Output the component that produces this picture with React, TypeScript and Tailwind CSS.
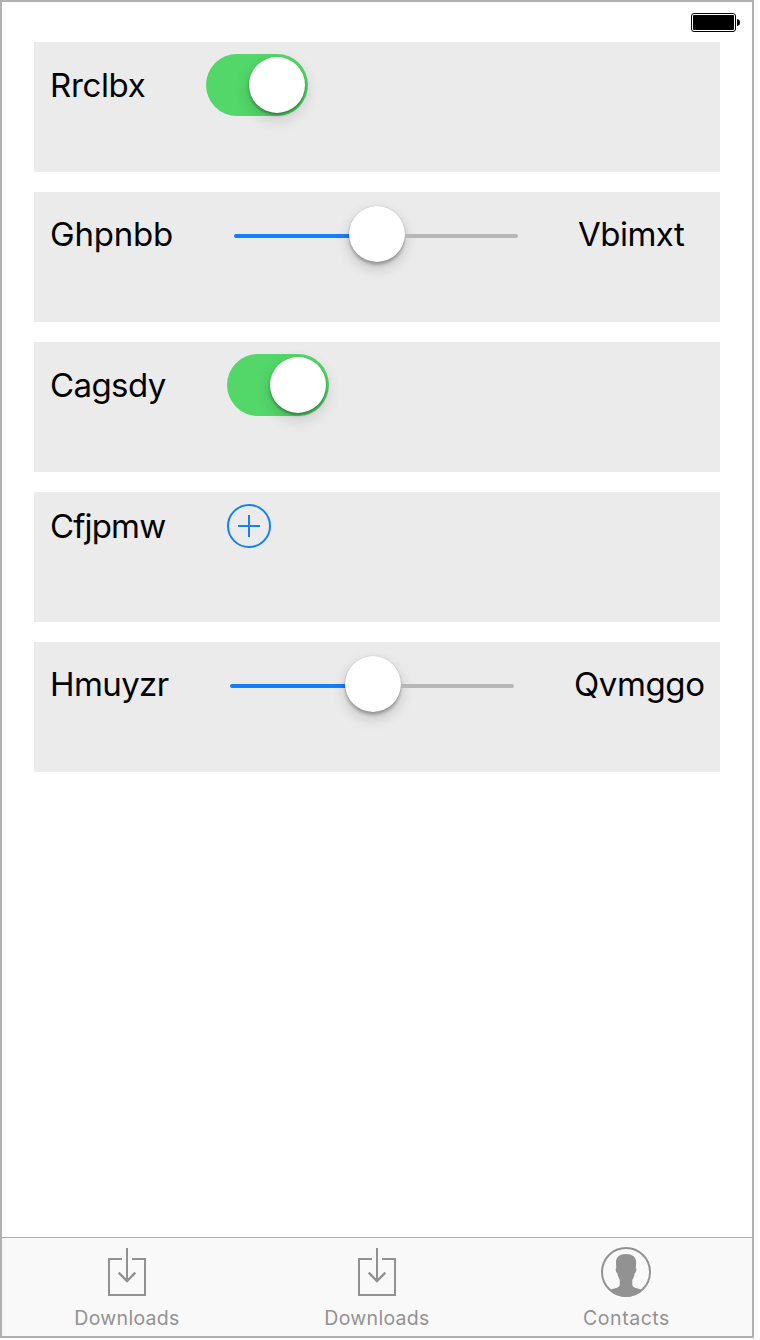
import React from "react";

function Label({ className, children }: { className: string; children: React.ReactNode }) {
  return (
    <span className={`block shrink-0 whitespace-nowrap text-[33px] leading-10 text-black ${className}`}>
      {children}
    </span>
  );
}

function Row({ children }: { children: React.ReactNode }) {
  return <div className="flex h-[130px] items-start bg-[#ebebeb] pl-4">{children}</div>;
}

function Toggle() {
  return (
    <div className="mt-3 flex h-[62px] w-[102px] items-center justify-end rounded-full bg-[#53d769] pr-[3px]">
      <div className="h-14 w-14 rounded-full bg-white shadow-[0_2px_3px_rgba(0,0,0,0.35),0_6px_16px_rgba(0,0,0,0.16)]" />
    </div>
  );
}

function Slider() {
  return (
    <div className="mt-3.5 flex h-14 w-[284px] shrink-0 items-center">
      <div className="mt-1 h-1 w-[115px] rounded-l-full bg-[#157efb]" />
      <div className="h-14 w-14 rounded-full bg-white shadow-[0_0_1px_rgba(0,0,0,0.3),0_3px_3px_rgba(0,0,0,0.24),0_6px_14px_rgba(0,0,0,0.18)]" />
      <div className="mt-1 h-1 flex-1 rounded-r-full bg-[#b6b6b6]" />
    </div>
  );
}

function DownloadIcon() {
  return (
    <svg width="50" height="50" viewBox="0 0 50 50" fill="none" stroke="#929292" strokeWidth="2">
      <path d="M20 12H7v36h36V12H30M25 1v33" />
      <path d="M16.7 25.7l8.3 8.3 8.3-8.3" strokeWidth="2.4" />
    </svg>
  );
}

function ContactIcon() {
  return (
    <svg className="mr-0.5" width="50" height="50" viewBox="0 0 50 50">
      <circle cx="25" cy="25" r="24" fill="none" stroke="#929292" strokeWidth="2" />
      <path
        fill="#929292"
        d="M25 7c3.200 0 6 .8 7.800 2.600 1.800 1.900 2.500 4 2.300 6.700l-.3 4.600c.8.300.7 1.500.5 2.500-.3 1.700-.7 2.300-1.500 2.600-.4 2.700-1.200 5-2.500 7.100v4.100c.2 2.300 1.300 3.200 3.700 3.900 2.300.7 4.400 1 6.200 2.200C37.200 47.200 31.400 50 25 50S12.800 47.200 8.800 43.300c1.800-1.200 3.900-1.500 6.200-2.200 2.400-.7 3.600-1.600 3.800-3.900v-4.100c-1.200-2-2-4.400-2.500-7.100-.8-.3-1.200-.9-1.500-2.600-.2-1-.3-2.200.5-2.500L15 16.300c-.2-3 .5-5.300 2.500-7C19.300 7.700 22 7 25 7z"
      />
    </svg>
  );
}

function Tab({ label, className, children }: { label: string; className: string; children: React.ReactNode }) {
  return (
    <div className="flex w-[250px] flex-col items-center pt-[9px]">
      {children}
      <span className={`mt-[9px] text-[19.5px] leading-6 text-[#929292] ${className}`}>{label}</span>
    </div>
  );
}

export default function App() {
  return (
    <div className="h-[1340px] w-[760px] bg-white font-['Inter',sans-serif]">
      <div className="flex h-[1338px] w-[754px] flex-col border-2 border-[#b2b2b2] bg-white">
        <div className="flex h-10 items-start justify-end pr-3 pt-[11px]">
          <svg width="50" height="20" viewBox="0 0 50 20">
            <rect x="1.500" y="0.500" width="44" height="18" rx="2.500" fill="none" stroke="#000" />
            <rect x="3" y="2" width="41" height="15" rx="1" />
            <path d="M47 6c2 .3 3 1.500 3 3.500S49 12.700 47 13z" />
          </svg>
        </div>
        <div className="ml-8 flex w-[686px] flex-1 flex-col gap-5">
          <Row>
            <Label className="mt-[23px] w-[156px] tracking-[-0.35px]">Rrclbx</Label>
            <Toggle />
          </Row>
          <Row>
            <Label className="mt-[22px] w-[184px] tracking-[-0.2px]">Ghpnbb</Label>
            <Slider />
            <Label className="ml-[60px] mt-[22px] tracking-[-0.5px]">Vbimxt</Label>
          </Row>
          <Row>
            <Label className="mt-[23px] w-[177px] tracking-[-0.6px]">Cagsdy</Label>
            <Toggle />
          </Row>
          <Row>
            <Label className="mt-3.5 w-[177px] tracking-[-0.85px]">Cfjpmw</Label>
            <svg className="mt-3" width="44" height="44" viewBox="0 0 44 44" fill="none" stroke="#157efb" strokeWidth="2">
              <circle cx="22" cy="22" r="21" />
              <path d="M11 22h22M22 11v22" />
            </svg>
          </Row>
          <Row>
            <Label className="mt-[22px] w-[180px] tracking-[-0.6px]">Hmuyzr</Label>
            <Slider />
            <Label className="ml-[60px] mt-[22px] tracking-[-0.4px]">Qvmggo</Label>
          </Row>
        </div>
        <div className="flex h-[99px] border-t border-[#acacac] bg-[#f9f9f9]">
          <Tab label="Downloads" className="tracking-[0.3px]">
            <DownloadIcon />
          </Tab>
          <Tab label="Downloads" className="tracking-[0.3px]">
            <DownloadIcon />
          </Tab>
          <Tab label="Contacts" className="mr-px tracking-[0.55px]">
            <ContactIcon />
          </Tab>
        </div>
      </div>
    </div>
  );
}
